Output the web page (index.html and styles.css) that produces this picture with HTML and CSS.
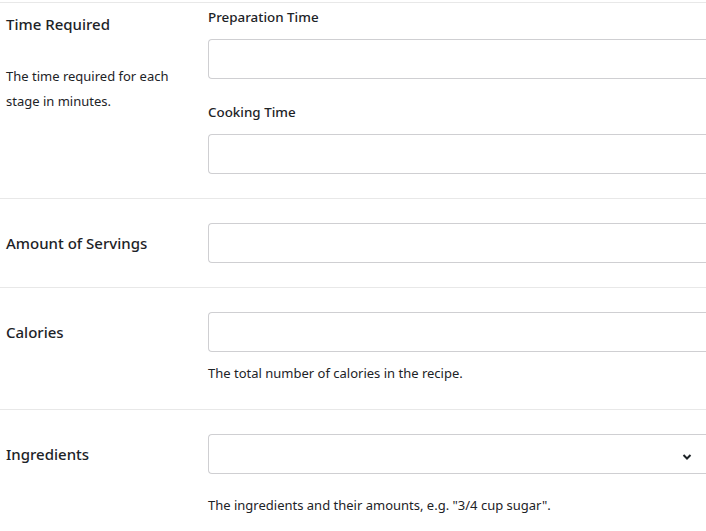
FILE: index.html
```html
<!DOCTYPE html>
<html>
<head>
<meta charset="utf-8">
<link rel="stylesheet" href="styles.css">
</head>
<body>
<div class="form">
  <div class="row row-time">
    <div class="head">
      <div class="title title-top">Time Required</div>
      <p class="side-desc">The time required for each stage in minutes.</p>
    </div>
    <div class="field">
      <label class="sub">Preparation Time</label>
      <input class="input" type="text">
      <label class="sub sub-second">Cooking Time</label>
      <input class="input" type="text">
    </div>
  </div>
  <div class="row row-center">
    <div class="head"><div class="title">Amount of Servings</div></div>
    <div class="field"><input class="input" type="text"></div>
  </div>
  <div class="row row-desc">
    <div class="head head-inline"><div class="title">Calories</div></div>
    <div class="field">
      <input class="input" type="text">
      <p class="desc">The total number of calories in the recipe.</p>
    </div>
  </div>
  <div class="row row-desc row-last">
    <div class="head head-inline"><div class="title">Ingredients</div></div>
    <div class="field">
      <div class="select-wrap">
        <div class="select"></div>
        <svg class="chev" width="10" height="8" viewBox="0 0 10 8"><path d="M1.5 2 L5 5.5 L8.5 2" fill="none" stroke="#1d2327" stroke-width="2"/></svg>
      </div>
      <p class="desc desc-far">The ingredients and their amounts, e.g. "3/4 cup sugar".</p>
    </div>
  </div>
</div>
</body>
</html>
```
FILE: styles.css
```css
html, body {
  margin: 0;
  padding: 0;
  background: #fff;
  overflow: hidden;
}
body {
  font-family: "Noto Sans", "Open Sans", sans-serif;
  color: #1d2327;
  width: 706px;
  height: 531px;
}
.form {
  padding-top: 2px;
}
.row {
  display: grid;
  grid-template-columns: 208px 1fr;
  border-top: 1px solid #e8e8e8;
}
.head {
  padding-left: 6px;
}
.title {
  font-size: 15px;
  font-weight: 500;
  line-height: 20px;
}
.title-top {
  padding-top: 11px;
}
.side-desc {
  margin: 30px 0 0;
  font-size: 13px;
  line-height: 25px;
  width: 170px;
}
.row-time .field {
  padding: 4px 0 24px;
}
.sub {
  display: block;
  font-size: 13.4px;
  font-weight: 500;
  line-height: 20px;
  margin-bottom: 12px;
}
.sub-second {
  margin-top: 23px;
}
.input {
  display: block;
  box-sizing: border-box;
  width: 100%;
  height: 40px;
  margin: 0;
  border: 1px solid #cfcfd2;
  border-right: none;
  border-radius: 4px 0 0 4px;
  background: #fff;
  font: inherit;
}
.row-center {
  align-items: center;
}
.row-center .field {
  padding: 24px 0 24px;
}
.row-desc .field {
  padding: 24px 0 25px;
}
.head-inline {
  padding-top: 34px;
}
.desc {
  margin: 10px 0 0;
  font-size: 13px;
  line-height: 22px;
}
.desc-far {
  margin-top: 20px;
}
.select-wrap {
  position: relative;
}
.select {
  box-sizing: border-box;
  height: 40px;
  border: 1px solid #cfcfd2;
  border-right: none;
  border-radius: 4px 0 0 4px;
  background: #fff;
}
.chev {
  position: absolute;
  right: 14px;
  top: 19px;
}
.row-last .head-inline {
  padding-top: 34px;
}
```
